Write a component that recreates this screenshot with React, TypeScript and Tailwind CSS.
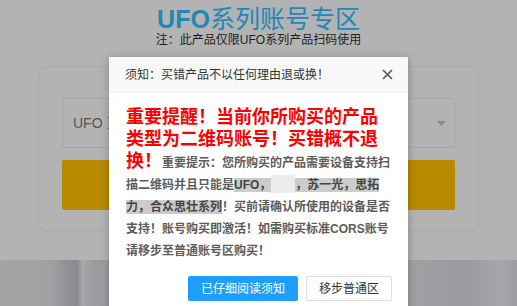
import React from 'react';

// Background page (already dimmed) with the notice dialog on top
export default function App() {
    return (
        <div className="relative h-[306px] w-[517px] overflow-hidden bg-[#b3b3b3] font-['Liberation_Sans','Noto_Sans_CJK_SC',sans-serif]">
            {/* Page heading */}
            <div className="flex flex-col items-center pt-[5px]">
                <h1 className="text-[25px] leading-[28px] text-[#1f88b8]">
                    <span className="font-bold">UFO</span>系列账号专区
                </h1>
                <p className="text-[12px] leading-[14px] text-[#1e1e1e]">注：此产品仅限UFO系列产品扫码使用</p>
            </div>

            {/* Order card */}
            <div className="mx-[38px] mt-[19px] flex flex-col gap-[12px] rounded-[8px] border border-[#a9a9a9] px-[23px] pb-[20px] pt-[31px]">
                <div className="flex h-[50px] items-center justify-between border border-[#a6a6a6] pl-[10px] pr-[8px] text-[14px] text-[#555]">
                    <span>UFO 系列二维码账号</span>
                    <svg width="9" height="5" viewBox="0 0 9 5">
                        <path d="M0 0h9L4.5 5z" fill="#8a8a8a" />
                    </svg>
                </div>
                <div className="h-[50px] rounded-[2px] bg-[#b88a00]" />
            </div>

            {/* Photo strip at the bottom */}
            <div className="mt-[29px] h-[50px] bg-[linear-gradient(90deg,#a4a4a6_0%,#a1a1a3_10%,#8f9095_13%,#8c8d92_15%,#a9a9ab_16%,#9a9b9f_18%,#a3a3a5_30%,#a0a0a3_80%,#9a9b9f_90%,#a6a7aa_97%,#9c9da0_100%)]" />

            {/* Notice dialog */}
            <div className="absolute left-[109px] top-[57px] w-[299px] bg-white shadow-[0_1px_8px_rgba(0,0,0,0.25)]">
                <div className="flex h-[36px] items-center justify-between border-b border-[#eeeeee] bg-[#f8f8f8] pl-[16px] pr-[15px]">
                    <span className="text-[12px] text-[#333]">须知：买错产品不以任何理由退或换！</span>
                    <svg width="11" height="11" viewBox="0 0 11 11">
                        <path d="M1 1l9 9M10 1l-9 9" stroke="#555" strokeWidth="1.6" />
                    </svg>
                </div>

                <div className="px-[17px] pt-[15px]">
                    <p className="w-[265px] text-[12px] font-bold leading-[22px] text-[#5c5c5c]">
                        <span className="text-[18px] leading-[17px] text-[#ff0000]">重要提醒！当前你所购买的产品类型为二维码账号！买错概不退换！</span>
                        重要提示：您所购买的产品需要设备支持扫描二维码并且只能是
                        <span className="bg-[#cccccc] text-[#444]">UFO，</span>
                        <span className="inline-block h-[18px] w-[24px] bg-[#ececec] align-[-4px]" />
                        <span className="bg-[#cccccc] text-[#444]">，苏一光，思拓力，合众思壮系列</span>
                        ！买前请确认所使用的设备是否支持！账号购买即激活！如需购买标准CORS账号请移步至普通账号区购买！
                    </p>
                </div>

                <div className="flex justify-end gap-[8px] pb-[12px] pr-[16px] pt-[14px]">
                    <button className="h-[25px] rounded-[2px] bg-[#1e9fff] px-[13px] text-[12px] text-white">已仔细阅读须知</button>
                    <button className="h-[25px] rounded-[2px] border border-[#dedede] bg-white px-[12px] text-[12px] text-[#333]">移步普通区</button>
                </div>
            </div>
        </div>
    );
}
